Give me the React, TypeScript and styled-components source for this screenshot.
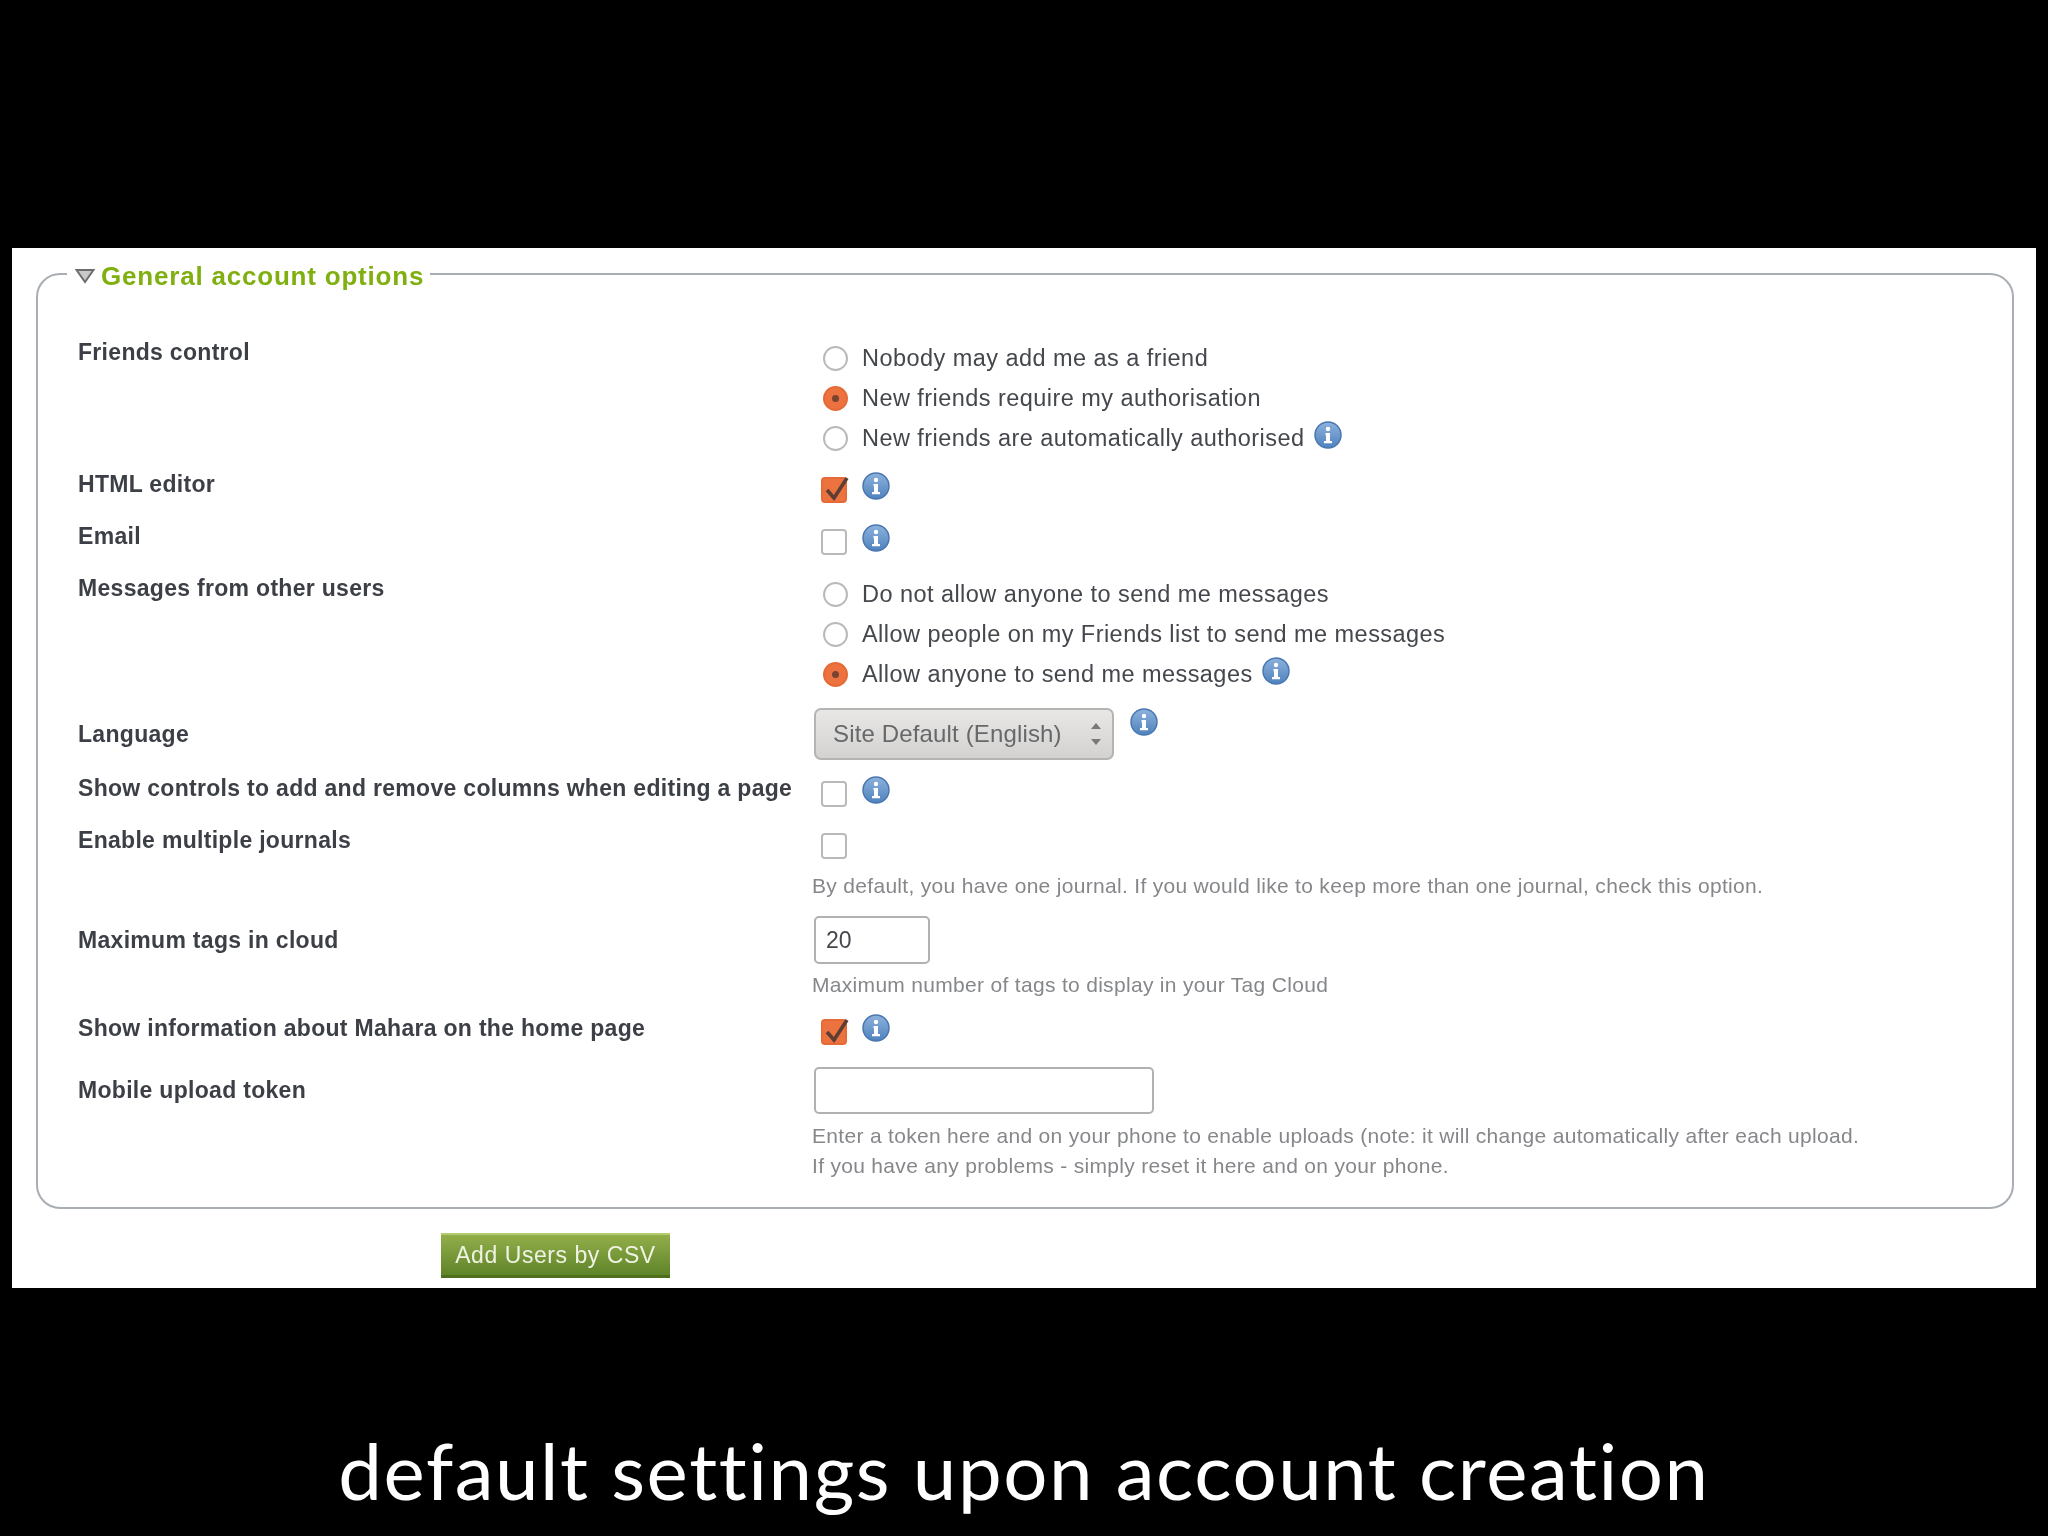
import styled, { createGlobalStyle } from 'styled-components';

const GlobalStyle = createGlobalStyle`
  html, body {
    margin: 0;
    padding: 0;
    background: #000;
  }
`;

const Slide = styled.div`
  width: 2048px;
  height: 1536px;
  background: #000;
  padding-top: 248px;
  box-sizing: border-box;
  overflow: hidden;
`;

const Panel = styled.div`
  width: 2024px;
  height: 1040px;
  margin-left: 12px;
  padding: 8px 22px 0 24px;
  box-sizing: border-box;
  background: #fff;
  font-family: 'Liberation Sans', Arial, sans-serif;
  filter: blur(0.6px);
`;

const Box = styled.fieldset`
  margin: 0;
  padding: 40px 0 0 40px;
  height: 953px;
  box-sizing: border-box;
  border: 2px solid #a8aeb4;
  border-radius: 24px;
`;

const Legend = styled.legend`
  display: flex;
  align-items: flex-end;
  gap: 6px;
  margin-left: -11px;
  padding: 0 6px 0 8px;
  height: 36px;
  font-size: 26px;
  line-height: 31px;
  letter-spacing: 0.8px;
  font-weight: 700;
  color: #7fb010;
  svg {
    align-self: center;
    margin-top: 3px;
  }
`;

const Row = styled.div<{ $h: number }>`
  display: grid;
  grid-template-columns: 734px 1fr;
  align-items: start;
  height: ${(p) => p.$h}px;
`;

const Label = styled.div`
  font-size: 23px;
  letter-spacing: 0.3px;
  font-weight: 700;
  line-height: 40px;
  color: #3c3f45;
  white-space: nowrap;
`;

const Field = styled.div<{ $top?: number }>`
  margin-top: ${(p) => p.$top ?? 0}px;
`;

const Line = styled.div<{ $box?: boolean }>`
  display: flex;
  align-items: center;
  height: 40px;
  padding-left: ${(p) => (p.$box ? 9 : 11)}px;
  font-size: 23.5px;
  letter-spacing: 0.45px;
  color: #44474c;
  white-space: nowrap;
`;

const Radio = styled.span<{ $on?: boolean }>`
  display: flex;
  align-items: center;
  justify-content: center;
  width: 25px;
  height: 25px;
  margin-right: 14px;
  box-sizing: border-box;
  border-radius: 50%;
  border: 2px solid ${(p) => (p.$on ? '#e56a35' : '#b9b9b9')};
  background: ${(p) => (p.$on ? '#ec7240' : '#fff')};
  &::after {
    content: '';
    display: ${(p) => (p.$on ? 'block' : 'none')};
    width: 7px;
    height: 7px;
    border-radius: 50%;
    background: #7a4330;
  }
`;

const Check = styled.span<{ $on?: boolean }>`
  position: relative;
  display: block;
  flex: none;
  width: 26px;
  height: 26px;
  margin-top: 2px;
  box-sizing: border-box;
  border-radius: 4px;
  border: 2px solid ${(p) => (p.$on ? '#e56a35' : '#b9b9b9')};
  background: ${(p) => (p.$on ? '#ec7240' : '#fff')};
  svg {
    position: absolute;
    left: -1px;
    top: -6px;
  }
`;

const Info = styled.svg<{ $left: number }>`
  flex: none;
  width: 28px;
  height: 28px;
  margin-left: ${(p) => p.$left}px;
  margin-bottom: 6px;
`;

const Help = styled.div<{ $mt?: number }>`
  margin-top: ${(p) => p.$mt ?? 0}px;
  font-size: 21px;
  letter-spacing: 0.31px;
  line-height: 30px;
  color: #85878a;
  white-space: nowrap;
`;

const SelectRow = styled.div`
  display: flex;
  align-items: flex-start;
  padding-left: 2px;
`;

const Select = styled.div`
  display: flex;
  align-items: center;
  justify-content: space-between;
  width: 300px;
  height: 52px;
  padding: 0 9px 0 17px;
  box-sizing: border-box;
  border: 2px solid #b4b4b2;
  border-radius: 7px;
  background: linear-gradient(#e8e7e5, #d3d2d0);
  font-size: 24px;
  letter-spacing: 0.15px;
  color: #66686a;
`;

const Arrows = styled.svg`
  width: 14px;
  height: 28px;
  fill: #77797b;
`;

const TextBox = styled.input<{ $w: number; $h: number }>`
  display: block;
  margin: 0 0 0 2px;
  width: ${(p) => p.$w}px;
  height: ${(p) => p.$h}px;
  padding: 0 10px;
  box-sizing: border-box;
  border: 2px solid #b1b1b3;
  border-radius: 5px;
  outline: none;
  background: #fff;
  font-family: 'Liberation Sans', Arial, sans-serif;
  font-size: 23px;
  color: #44474c;
`;

const AddButton = styled.button`
  display: block;
  margin: 24px 0 0 405px;
  width: 229px;
  height: 45px;
  padding: 0;
  border: none;
  border-top: 2px solid #b3cc70;
  border-bottom: 3px solid #4e6e1c;
  background: linear-gradient(#92ae4a, #5f8429);
  font-family: 'Liberation Sans', Arial, sans-serif;
  font-size: 23px;
  letter-spacing: 0.55px;
  color: #f0f3e4;
`;

const Caption = styled.div`
  margin-top: 132px;
  text-align: center;
  font-family: Lato, 'Open Sans', sans-serif;
  font-size: 78px;
  letter-spacing: 1.6px;
  font-variant-ligatures: none;
  line-height: 100px;
  color: #fff;
`;

const InfoIcon = ({ left = 9 }: { left?: number }) => (
  <Info $left={left} viewBox="0 0 28 28">
    <defs>
      <linearGradient id="infoFill" x1="0" y1="0" x2="0" y2="1">
        <stop offset="0" stopColor="#8db2dd" />
        <stop offset="1" stopColor="#4f82bd" />
      </linearGradient>
    </defs>
    <circle cx="14" cy="14" r="13" fill="url(#infoFill)" stroke="#4a77b0" strokeWidth="1.5" />
    <circle cx="14" cy="8" r="2.2" fill="#fff" />
    <path d="M11.5 12h4.5v8h2v2.2h-8V20h2v-5.8h-.5z" fill="#fff" />
  </Info>
);

const CheckBox = ({ on }: { on?: boolean }) => (
  <Check $on={on}>
    {on && (
      <svg width="28" height="30" viewBox="0 0 28 30">
        <path d="M5 17l7 8L25 5" fill="none" stroke="#5e3d32" strokeWidth="3.6" />
      </svg>
    )}
  </Check>
);

export default function App() {
  return (
    <>
      <GlobalStyle />
      <Slide>
        <Panel>
          <Box>
            <Legend>
              <svg width="20" height="16" viewBox="0 0 20 16">
                <path d="M1.5 2h17L10 14z" fill="#c9c9c9" stroke="#6d6d6d" strokeWidth="2" />
              </svg>
              General account options
            </Legend>

            <Row $h={132}>
              <Label>Friends control</Label>
              <Field $top={6}>
                <Line><Radio />Nobody may add me as a friend</Line>
                <Line><Radio $on />New friends require my authorisation</Line>
                <Line><Radio />New friends are automatically authorised<InfoIcon /></Line>
              </Field>
            </Row>

            <Row $h={52}>
              <Label>HTML editor</Label>
              <Field $top={5}>
                <Line $box><CheckBox on /><InfoIcon left={15} /></Line>
              </Field>
            </Row>

            <Row $h={52}>
              <Label>Email</Label>
              <Field $top={5}>
                <Line $box><CheckBox /><InfoIcon left={15} /></Line>
              </Field>
            </Row>

            <Row $h={146}>
              <Label>Messages from other users</Label>
              <Field $top={6}>
                <Line><Radio />Do not allow anyone to send me messages</Line>
                <Line><Radio />Allow people on my Friends list to send me messages</Line>
                <Line><Radio $on />Allow anyone to send me messages<InfoIcon /></Line>
              </Field>
            </Row>

            <Row $h={54}>
              <Label>Language</Label>
              <Field $top={-6}>
                <SelectRow>
                  <Select>
                    Site Default (English)
                    <Arrows viewBox="0 0 14 28">
                      <path d="M7 3l5 6H2zM7 25l-5-6h10z" />
                    </Arrows>
                  </Select>
                  <InfoIcon left={16} />
                </SelectRow>
              </Field>
            </Row>

            <Row $h={52}>
              <Label>Show controls to add and remove columns when editing a page</Label>
              <Field $top={5}>
                <Line $box><CheckBox /><InfoIcon left={15} /></Line>
              </Field>
            </Row>

            <Row $h={100}>
              <Label>Enable multiple journals</Label>
              <Field $top={5}>
                <Line $box><CheckBox /></Line>
                <Help $mt={6}>By default, you have one journal. If you would like to keep more than one journal, check this option.</Help>
              </Field>
            </Row>

            <Row $h={88}>
              <Label>Maximum tags in cloud</Label>
              <Field $top={-4}>
                <TextBox $w={116} $h={48} defaultValue="20" />
                <Help $mt={6}>Maximum number of tags to display in your Tag Cloud</Help>
              </Field>
            </Row>

            <Row $h={62}>
              <Label>Show information about Mahara on the home page</Label>
              <Field $top={3}>
                <Line $box><CheckBox on /><InfoIcon left={15} /></Line>
              </Field>
            </Row>

            <Row $h={139}>
              <Label>Mobile upload token</Label>
              <Field $top={-3}>
                <TextBox $w={340} $h={47} />
                <Help $mt={7}>Enter a token here and on your phone to enable uploads (note: it will change automatically after each upload.</Help>
                <Help>If you have any problems - simply reset it here and on your phone.</Help>
              </Field>
            </Row>
          </Box>
          <AddButton>Add Users by CSV</AddButton>
        </Panel>
        <Caption>default settings upon account creation</Caption>
      </Slide>
    </>
  );
}
